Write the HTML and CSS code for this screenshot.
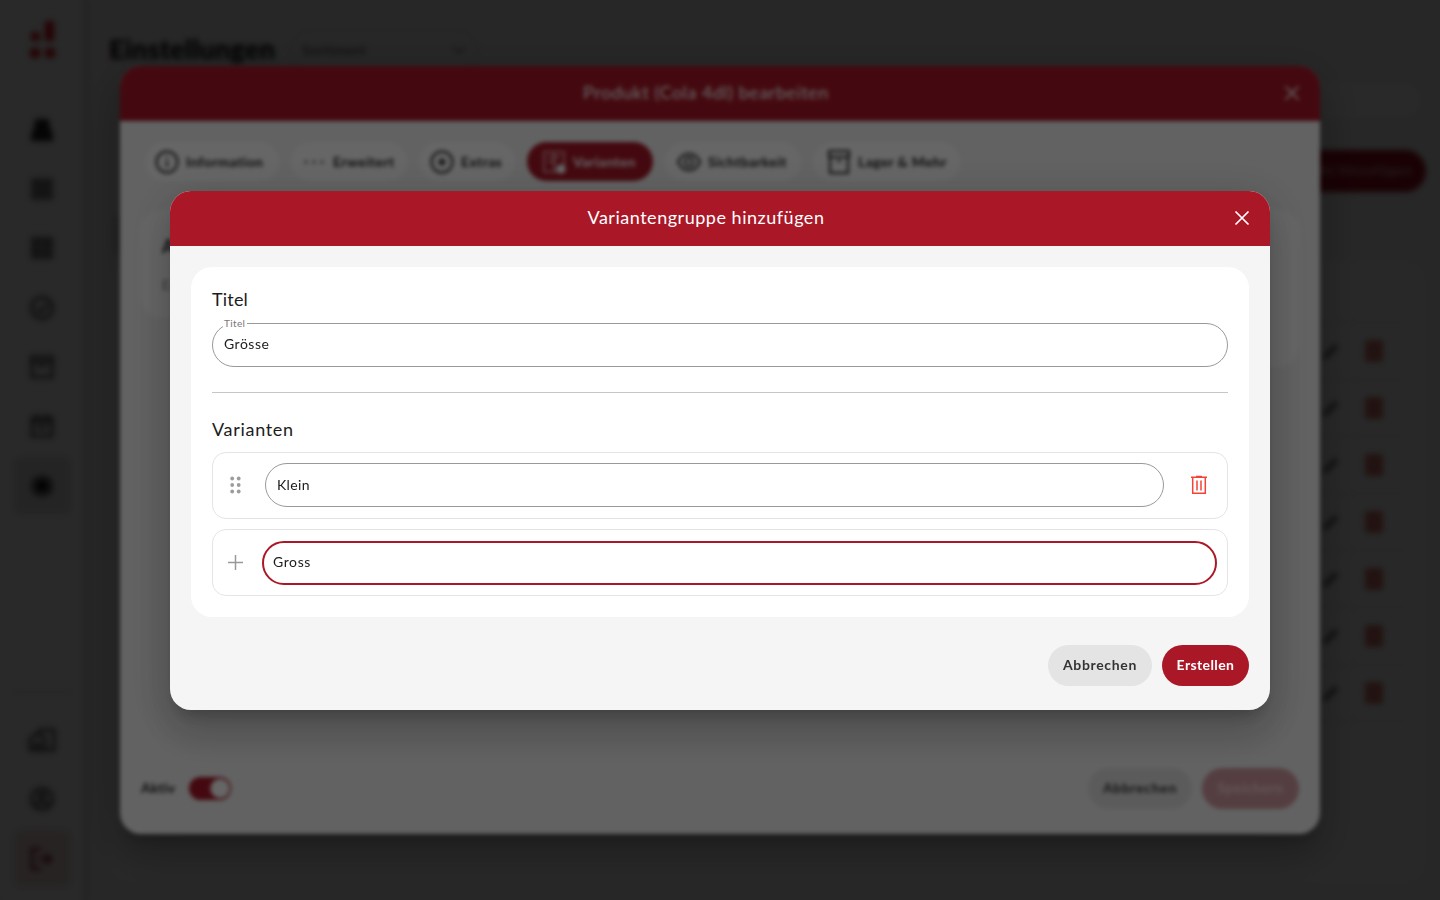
FILE: index.html
```html
<!DOCTYPE html>
<html lang="de">
<head>
<meta charset="utf-8">
<title>Einstellungen</title>
<link rel="stylesheet" href="styles.css">
</head>
<body>
<svg class="defs" width="0" height="0">
  <symbol id="close" viewBox="0 0 16 16"><path d="M1.500 1.500l13 13M14.500 1.500l-13 13" fill="none" stroke="currentColor" stroke-width="1.700"/></symbol>
  <symbol id="pencil" viewBox="0 0 24 24"><path d="M3 21l1-5L16 4l4 4L8 20z" fill="currentColor"/></symbol>
</svg>
<div class="app">
  <aside class="side">
    <svg class="logo" width="26" height="38" viewBox="0 0 26 38" fill="#e80f1a"><rect x="15" y="0" width="9" height="20" rx="2"/><rect x="1" y="11" width="9" height="9" rx="3"/><rect x="0" y="27" width="10" height="10" rx="4"/><rect x="15" y="27" width="10" height="10" rx="4"/></svg>
    <nav class="nav">
      <a class="item"><svg viewBox="0 0 24 24"><path d="M5 1h14v5l4 12v5H1v-5L5 6z" fill="#222"/></svg></a>
      <a class="item"><svg viewBox="0 0 24 24"><rect x="1" y="1" width="22" height="22" rx="2" fill="#888"/><path d="M5 8h14M5 16h14" stroke="#666" stroke-width="2"/></svg></a>
      <a class="item"><svg viewBox="0 0 24 24"><rect x="1" y="1" width="22" height="22" rx="2" fill="#777"/><path d="M13 2v8H2M22 14H11v8" stroke="#aaa" stroke-width="2" fill="none"/></svg></a>
      <a class="item"><svg viewBox="0 0 24 24" fill="none" stroke="#555" stroke-width="3"><circle cx="12" cy="12" r="10.500"/><path d="M7 12l4 4 7-8"/></svg></a>
      <a class="item"><svg viewBox="0 0 24 24" fill="none" stroke="#555" stroke-width="3"><path d="M1 2h22v5H1zM2 7v15h20V7M9 11h6"/></svg></a>
      <a class="item"><svg viewBox="0 0 24 24" fill="none" stroke="#555" stroke-width="3"><path d="M2 4h20v18H2zM2 8h20M7 0v5M17 0v5M7 14h10"/></svg></a>
      <a class="item active"><svg viewBox="0 0 24 24"><path d="M12 0l4 3 5 0 1 5 2 4-2 4-1 5-5 0-4 3-4-3-5 0-1-5-2-4 2-4 1-5 5 0z" fill="#666"/><circle cx="12" cy="12" r="5"/></svg></a>
    </nav>
    <nav class="nav bottom">
      <a class="item"><svg class="wide" viewBox="0 0 28 24" fill="none" stroke="#555" stroke-width="3"><path d="M2 22V11l8-6 7 6v11zM12 4V2h14v20H17M7 22v-6h5v6"/></svg></a>
      <a class="item"><svg viewBox="0 0 24 24" fill="none" stroke="#555" stroke-width="3"><circle cx="12" cy="12" r="10.500"/><circle cx="12" cy="9" r="3"/><path d="M5 19c3-5 11-5 14 0"/></svg></a>
      <a class="item logout"><svg viewBox="0 0 24 24" fill="none" stroke="#8b2630" stroke-width="3"><path d="M11 2H2v20h9M8 12h13M16 7l5 5-5 5"/></svg></a>
    </nav>
  </aside>
  <main class="main">
    <div class="top"><h1>Einstellungen</h1><div class="select"><span>Sortiment</span><svg width="14" height="10" viewBox="0 0 14 10" fill="none" stroke="#888" stroke-width="2"><path d="M1 2l6 6 6-6"/></svg></div></div>
    <div class="search"></div>
    <div class="add">Produkt hinzufügen</div>
    <div class="dark"></div>
    <div class="table">
      <div class="tr"><svg class="pen"><use href="#pencil"/></svg><i></i></div>
      <div class="tr"><svg class="pen"><use href="#pencil"/></svg><i></i></div>
      <div class="tr"><svg class="pen"><use href="#pencil"/></svg><i></i></div>
      <div class="tr"><svg class="pen"><use href="#pencil"/></svg><i></i></div>
      <div class="tr"><svg class="pen"><use href="#pencil"/></svg><i></i></div>
      <div class="tr"><svg class="pen"><use href="#pencil"/></svg><i></i></div>
      <div class="tr"><svg class="pen"><use href="#pencil"/></svg><i></i></div>
    </div>
  </main>
</div>

<div class="overlay">
  <section class="modal product">
    <header class="head"><span class="head-title">Produkt (Cola 4dl) bearbeiten</span><svg width="16" height="16"><use href="#close"/></svg></header>
    <div class="tabs">
      <div class="tab info"><svg viewBox="0 0 24 24" fill="none" stroke="#222" stroke-width="2"><circle cx="12" cy="12" r="10.500"/><path d="M12 11v6M12 7v2"/></svg>Information</div>
      <div class="tab more"><svg viewBox="0 0 24 24" fill="#444"><circle cx="4" cy="12" r="1.500"/><circle cx="12" cy="12" r="1.500"/><circle cx="20" cy="12" r="1.500"/></svg>Erweitert</div>
      <div class="tab extras"><svg viewBox="0 0 24 24" fill="none" stroke="#222" stroke-width="2"><circle cx="12" cy="12" r="10.500"/><path d="M12 8v8M8 12h8" stroke-width="2.500"/></svg>Extras</div>
      <div class="tab on"><svg viewBox="0 0 24 24" fill="none" stroke="#fff" stroke-opacity=".7" stroke-width="1.600"><path d="M2 2h20v20H2zM12 2v20M6 7h12M6 12h8"/><circle cx="19" cy="19" r="4" fill="#fff"/></svg>Varianten</div>
      <div class="tab sight"><svg viewBox="0 0 24 24" fill="none" stroke="#222" stroke-width="2"><path d="M1 12c5-11 17-11 22 0-5 11-17 11-22 0z"/><circle cx="12" cy="12" r="4"/></svg>Sichtbarkeit</div>
      <div class="tab stock"><svg viewBox="0 0 24 24" fill="none" stroke="#222" stroke-width="2"><path d="M2 1h20v6H2zM3 7v16h18V7M10 11h4"/></svg>Lager &amp; Mehr</div>
    </div>
    <div class="cards"><div class="box"><b>Alle</b><span>Extra</span></div><div class="box tall"></div></div>
    <footer class="foot"><span class="aktiv">Aktiv</span><span class="switch"></span><span class="btn gray">Abbrechen</span><span class="btn pale">Speichern</span></footer>
  </section>
</div>

<div class="overlay">
  <section class="modal group">
    <header class="head"><span class="head-title">Variantengruppe hinzufügen</span><svg width="16" height="16"><use href="#close"/></svg></header>
    <div class="panel">
      <h2>Titel</h2>
      <div class="field"><span class="legend">Titel</span>Grösse</div>
      <hr>
      <h2 class="second">Varianten</h2>
      <div class="variant">
        <svg class="grip" width="12" height="18" viewBox="0 0 12 18" fill="#9c9c9c"><circle cx="2.200" cy="2.500" r="1.900"/><circle cx="8.700" cy="2.500" r="1.900"/><circle cx="2.200" cy="9" r="1.900"/><circle cx="8.700" cy="9" r="1.900"/><circle cx="2.200" cy="15.500" r="1.900"/><circle cx="8.700" cy="15.500" r="1.900"/></svg>
        <div class="field">Klein</div>
        <svg class="bin" width="18" height="20" viewBox="0 0 18 20" fill="none" stroke="#f44336" stroke-width="1.500"><path d="M1 2.200h16M6 1.400h6"/><path d="M2.700 2.500v15.800h12.600V2.500M7 5.500v10M11 5.500v10"/></svg>
      </div>
      <div class="variant new">
        <svg class="plus" width="15" height="15" viewBox="0 0 15 15" stroke="#999" stroke-width="1.500"><path d="M7.500 0v15M0 7.500h15"/></svg>
        <div class="field focus">Gross</div>
      </div>
    </div>
    <footer class="actions"><span class="btn gray">Abbrechen</span><span class="btn red">Erstellen</span></footer>
  </section>
</div>
</body>
</html>
```
FILE: styles.css
```css
* { box-sizing: border-box; }
body { margin: 0; width: 1440px; height: 900px; overflow: hidden; position: relative; background: #f5f5f5; color: #1c1c1c; font: 14px/20px Lato, "Liberation Sans", sans-serif; letter-spacing: .45px; }
.defs { position: absolute; }
svg { display: block; flex: none; }
h1, h2 { margin: 0; }

.app { display: flex; width: 1440px; height: 900px; }
.side { width: 84px; background: #fff; box-shadow: 2px 0 6px rgba(0,0,0,.22); display: flex; flex-direction: column; align-items: center; padding-top: 21px; }
.logo { margin-left: 1px; }
.nav { display: flex; flex-direction: column; gap: 2.400px; margin-top: 42px; }
.nav.bottom { margin-top: auto; padding-top: 18px; padding-bottom: 13px; border-top: 2px solid #e5e5e5; }
.item { width: 57px; height: 57px; border-radius: 7px; display: flex; align-items: center; justify-content: center; }
.item svg { width: 24px; height: 24px; }
.item svg.wide { width: 28px; }
.item.active { background: #e3e3e3; }
.item.logout { background: #f8dedf; }

.main { flex: 1; padding: 29px 14px 17px 25px; display: flex; flex-direction: column; align-items: flex-end; }
.top { width: 100%; height: 42px; display: flex; align-items: center; }
h1 { width: 181px; font-size: 27px; line-height: 40px; padding-bottom: 2px; letter-spacing: .3px; font-weight: 900; color: #000; }
.select { width: 188px; height: 42px; border: 1px solid #ccc; border-radius: 21px; padding: 0 11px 1px; display: flex; align-items: center; justify-content: space-between; color: #444; }
.search { width: 350px; height: 42px; margin: 8px 2px 0 0; border: 1px solid #ddd; border-radius: 21px; background: #fff; }
.add { margin-top: 29px; width: 190px; height: 42px; padding-right: 14px; text-align: right; line-height: 40px; border-radius: 21px; background: #a00a1c; color: #e0a0a4; font-weight: 700; }
.dark { align-self: flex-start; margin: 22px 0 9px 3px; width: 60px; height: 42px; border-radius: 8px; background: #ddd; }
.table { width: 1317px; flex: 1; margin-top: -4px; border-radius: 21px; background: #fcfcfc; padding: 61px 19px 0; }
.tr { height: 57px; border-top: 1px solid #e0e0e0; display: flex; align-items: center; justify-content: flex-end; padding-right: 24px; gap: 23px; }
.tr:last-child { border-bottom: 1px solid #e0e0e0; }
.pen { width: 22px; height: 22px; color: #666; }
.tr i { width: 18px; height: 22px; border-radius: 3px; background: #d4776d; }

.overlay { position: absolute; inset: 0; display: flex; align-items: center; justify-content: center; background: rgba(0,0,0,.6); backdrop-filter: blur(2px); }
.modal { border-radius: 21px; overflow: hidden; background: #f5f5f5; display: flex; flex-direction: column; box-shadow: 0 11px 15px -7px rgba(0,0,0,.2), 0 24px 38px 3px rgba(0,0,0,.14), 0 9px 46px 8px rgba(0,0,0,.12); }
.product { width: 1200px; height: 768px; }
.group { width: 1100px; height: 519px; margin-top: 1px; }
.head { height: 55px; flex: none; display: flex; align-items: center; background: #aa1828; color: #fff; padding: 0 20px 2px 8px; font-size: 18px; }
.head-title { flex: 1; text-align: center; padding-bottom: 2px; letter-spacing: .52px; }

.tabs { display: flex; gap: 12px; padding: 21px 25px 0; }
.tab { height: 39px; border-radius: 20px; background: #fff; display: flex; align-items: center; gap: 7px; padding-left: 10px; font-weight: 700; white-space: nowrap; letter-spacing: .36px; }
.tab svg { width: 24px; height: 24px; }
.info { width: 134px; }
.more { width: 116px; padding-left: 11px; }
.extras { width: 96px; padding-left: 11px; }
.on { width: 126px; padding-left: 15px; background: #aa1828; color: #fff; letter-spacing: .3px; }
.sight { width: 136px; padding-left: 12px; }
.stock { width: 147px; padding-left: 14px; }
.cards { flex: 1; display: flex; align-items: flex-start; gap: 21px; padding: 29px 21px 0; }
.box { flex: 1; height: 108px; border-radius: 21px; background: #fff; padding: 26px 21px; display: flex; flex-direction: column; gap: 19px; }
.box b { font-size: 18px; }
.box span { color: #777; }
.box.tall { height: 157px; }
.foot { display: flex; align-items: center; padding: 0 21px 25px; }
.aktiv { width: 48px; font-weight: 700; letter-spacing: .2px; padding-bottom: 1px; }
.switch { width: 42px; height: 23px; border-radius: 12px; background: radial-gradient(circle at 31px 11.500px, #fff 9px, #aa1828 10px); margin-right: auto; }

.btn { height: 41px; border-radius: 21px; display: flex; align-items: center; justify-content: center; margin-left: 10px; padding-bottom: 1px; font-weight: 700; }
.gray { width: 104px; background: #e4e4e4; color: #333; letter-spacing: .65px; }
.red { width: 87px; background: #aa1828; color: #fff; letter-spacing: .4px; }
.pale { width: 97px; background: #d49ca2; color: #f3d5d8; }

.panel { height: 350px; margin: 21px 21px 28px; padding: 20px 21px; border-radius: 21px; background: #fff; }
h2 { font-size: 18px; line-height: 24px; font-weight: 400; letter-spacing: .2px; }
h2.second { margin-top: -1px; letter-spacing: .7px; }
.field { position: relative; height: 44px; border: 1px solid #999; border-radius: 22px; padding: 0 11px 2px; display: flex; align-items: center; letter-spacing: .5px; }
h2 + .field { margin-top: 12px; }
.legend { position: absolute; left: 10px; top: -8px; padding: 0 2px 0 1px; background: #fff; font-size: 10px; line-height: 14px; letter-spacing: .35px; color: #777; }
hr { margin: 25px 0; border: 0; height: 1px; background: #c6c6c6; }
.variant { height: 67px; margin-top: 11px; border: 1px solid #e4e4e4; border-radius: 14px; display: flex; align-items: center; padding: 0 10px 1px 17px; }
.variant .field { flex: 1; padding-bottom: 0; letter-spacing: .35px; }
.grip { margin-right: 23px; }
.bin { margin: 0 9px 0 26px; }
.variant.new { margin-top: 10px; padding: 0 10px 0 15px; }
.plus { margin-right: 19px; }
.variant .focus { border: 2px solid #aa1828; padding: 0 9px 2px; margin-top: 1px; letter-spacing: .6px; }
.actions { display: flex; justify-content: flex-end; padding-right: 21px; }
```
